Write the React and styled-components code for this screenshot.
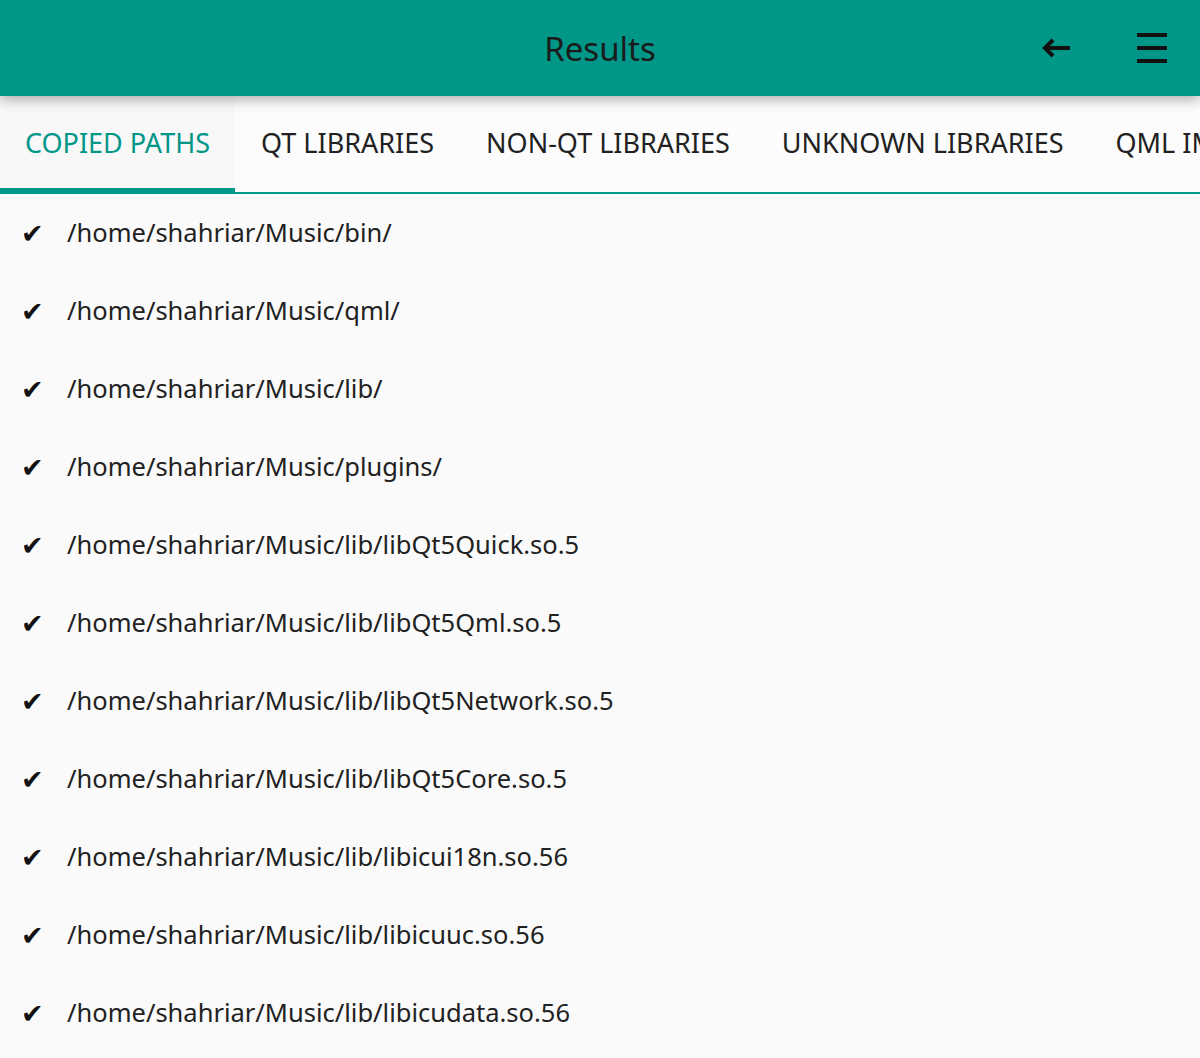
import React, { useState } from 'react';
import styled, { createGlobalStyle } from 'styled-components';

const GlobalStyle = createGlobalStyle`
  html, body {
    margin: 0;
    padding: 0;
    background: #fafafa;
    font-family: "Noto Sans", "Open Sans", sans-serif;
    color: #212121;
  }
`;

const TABS = ['COPIED PATHS', 'QT LIBRARIES', 'NON-QT LIBRARIES', 'UNKNOWN LIBRARIES', 'QML IMPORTS'];

const PATHS = [
  '/home/shahriar/Music/bin/',
  '/home/shahriar/Music/qml/',
  '/home/shahriar/Music/lib/',
  '/home/shahriar/Music/plugins/',
  '/home/shahriar/Music/lib/libQt5Quick.so.5',
  '/home/shahriar/Music/lib/libQt5Qml.so.5',
  '/home/shahriar/Music/lib/libQt5Network.so.5',
  '/home/shahriar/Music/lib/libQt5Core.so.5',
  '/home/shahriar/Music/lib/libicui18n.so.56',
  '/home/shahriar/Music/lib/libicuuc.so.56',
  '/home/shahriar/Music/lib/libicudata.so.56',
];

const BackIcon = () => (
  <svg width="30" height="20" viewBox="0 0 30 20">
    <path d="M29 10 H5 M12 2 L4 10 L12 18" fill="none" stroke="#111" strokeWidth="4" strokeLinecap="butt" strokeLinejoin="miter" />
  </svg>
);

const MenuIcon = () => (
  <svg width="30" height="30" viewBox="0 0 30 30">
    <rect x="0" y="0" width="30" height="4" fill="#111" />
    <rect x="0" y="13" width="30" height="4" fill="#111" />
    <rect x="0" y="26" width="30" height="4" fill="#111" />
  </svg>
);

const App = () => {
  const [active, setActive] = useState(0);
  return (
    <Page>
      <GlobalStyle />
      <Header>
        <Title>Results</Title>
        <HeaderActions>
          <IconButton aria-label="back"><BackIcon /></IconButton>
          <IconButton aria-label="menu"><MenuIcon /></IconButton>
        </HeaderActions>
      </Header>
      <TabBar>
        {TABS.map((t, i) => (
          <Tab key={t} $active={i === active} onClick={() => setActive(i)}>{t}</Tab>
        ))}
      </TabBar>
      <List>
        {PATHS.map((p) => (
          <Row key={p}>
            <Check>✔</Check>
            <PathText>{p}</PathText>
          </Row>
        ))}
      </List>
    </Page>
  );
};

export default App;

const Page = styled.div`
  width: 1200px;
  height: 1058px;
  overflow: hidden;
  background: #fafafa;
`;

const Header = styled.header`
  position: relative;
  z-index: 2;
  height: 96px;
  background: #009688;
  display: flex;
  align-items: center;
  justify-content: center;
  box-shadow: 0 4px 12px rgba(0, 0, 0, 0.3);
`;

const Title = styled.h1`
  margin: 0;
  font-size: 33px;
  font-weight: 400;
  color: #1b1b1b;
`;

const HeaderActions = styled.div`
  position: absolute;
  right: 33px;
  top: 0;
  height: 96px;
  display: flex;
  align-items: center;
  gap: 66px;
`;

const IconButton = styled.button`
  border: 0;
  padding: 0;
  background: transparent;
  display: flex;
  align-items: center;
  cursor: pointer;
`;

const TabBar = styled.nav`
  display: flex;
  height: 98px;
  box-sizing: border-box;
  border-bottom: 2px solid #009688;
  overflow: hidden;
  background: #fcfcfc;
`;

const Tab = styled.div`
  flex: none;
  display: flex;
  align-items: center;
  padding: 0 26px 4px 26px;
  font-size: 27px;
  white-space: nowrap;
  color: ${(p) => (p.$active ? '#009688' : '#212121')};
  background: ${(p) => (p.$active ? '#f8f8f8' : 'transparent')};
  box-shadow: ${(p) => (p.$active ? 'inset 0 -4px 0 #009688' : 'none')};
  box-sizing: border-box;
  cursor: pointer;
  &:first-child {
    padding-left: 25px;
    padding-right: 25px;
  }
`;

const List = styled.div`
  display: flex;
  flex-direction: column;
`;

const Row = styled.div`
  height: 78px;
  display: flex;
  align-items: center;
  padding-left: 21px;
`;

const Check = styled.span`
  width: 46px;
  font-family: "DejaVu Sans", sans-serif;
  font-size: 27px;
  line-height: 1;
  color: #111;
`;

const PathText = styled.span`
  font-size: 25.5px;
  line-height: 1.2;
  margin-top: -2px;
`;
